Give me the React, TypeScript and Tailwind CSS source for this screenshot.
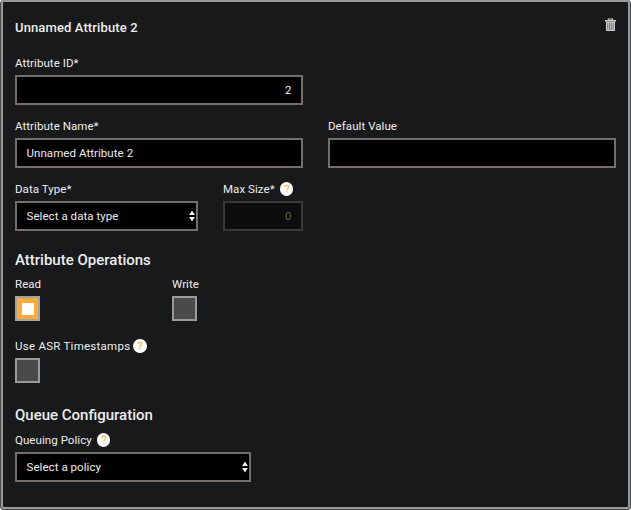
import React from "react";

function Help() {
  return (
    <span className="flex size-[13.5px] shrink-0 items-center justify-center rounded-full bg-white">
      <svg className="size-[13.5px]" viewBox="0 0 14 14" fill="none" stroke="#ffbd66" strokeWidth="1.5">
        <path d="M5 5.2C5 2.8 9 2.8 9 5.2c0 1.4-1.9 1.7-1.9 3.3" />
        <path d="M7.1 9.5v1.5" />
      </svg>
    </span>
  );
}

function Label({ text, help, wide }: { text: string; help?: boolean; wide?: boolean }) {
  return (
    <div className={wide ? "flex h-[26px] items-center gap-[3px] pt-[2px] whitespace-nowrap" : "flex h-[26px] items-center gap-[5px] pt-[2px] whitespace-nowrap"}>
      <span className={wide ? "tracking-[0.26px]" : ""}>{text}</span>
      {help && <Help />}
    </div>
  );
}

function Arrows() {
  return (
    <svg className="h-3 w-[6px]" viewBox="0 0 6 12" fill="#f4f4f4">
      <path d="M3 0.6 5.9 5H0.1zM3 11.4 0.1 7h5.8z" />
    </svg>
  );
}

function Select({ text }: { text: string }) {
  return (
    <div className="flex h-[30px] items-center justify-between border-2 border-[#756e6b] bg-black pr-px pl-[9.5px]">
      <span>{text}</span>
      <Arrows />
    </div>
  );
}

function Check({ on }: { on?: boolean }) {
  return on ? (
    <div className="flex size-[25px] items-center justify-center border-2 border-[#a3a3a3] bg-[#ffab3a]">
      <div className="size-3 bg-white" />
    </div>
  ) : (
    <div className="size-[25px] border-2 border-[#9b9999] bg-[#4a4a4a]" />
  );
}

function Trash() {
  return (
    <svg className="mt-px mr-px h-[14px] w-[11px]" viewBox="0 0 11 14">
      <path d="M3.5 2.5V1h4v1.5" fill="none" stroke="#d0d0d0" strokeWidth="1.2" />
      <path d="M0 2h11v1.6H0z" fill="#d0d0d0" />
      <path d="M1 4h9v9H1z" fill="#c8c8c8" />
      <path d="M2.75 5v7M4.6 5v7M6.4 5v7M8.25 5v7" stroke="#555657" strokeWidth="0.7" />
    </svg>
  );
}

export default function App() {
  return (
    <div className="h-[510px] w-[631px] bg-white font-['Roboto',sans-serif] text-[11.5px] leading-4 tracking-[0.06px] text-[#eeeeee]">
      <div className="h-[510px] w-[631px] rounded-[4px] border border-t-0 border-[#484848] bg-[#484848]">
        <div className="h-[509px] w-[629px] rounded-[3px] border-2 border-[#98999a] bg-[#18191b] pt-[15px] pr-[11px] pl-[12px]">
          <div className="flex h-[32px] items-start justify-between">
            <h2 className="pt-[3px] text-[13px] leading-4 font-medium tracking-[0.12px]">Unnamed Attribute 2</h2>
            <Trash />
          </div>
          <div className="w-[288px]">
            <Label text="Attribute ID*" />
            <div className="flex h-[30px] items-center justify-end border-2 border-[#756e6b] bg-black pr-[9.5px]">2</div>
          </div>
          <div className="mt-[7px] flex gap-[25px]">
            <div className="w-[288px]">
              <Label text="Attribute Name*" />
              <div className="flex h-[30px] items-center border-2 border-[#756e6b] bg-black pl-[9.5px]">Unnamed Attribute 2</div>
            </div>
            <div className="w-[288px]">
              <Label text="Default Value" />
              <div className="h-[30px] border-2 border-[#756e6b] bg-black" />
            </div>
          </div>
          <div className="mt-[7px] flex gap-[25px]">
            <div className="w-[183px]">
              <Label text="Data Type*" />
              <Select text="Select a data type" />
            </div>
            <div className="w-[80px]">
              <Label text="Max Size*" help />
              <div className="flex h-[30px] items-center justify-end border-2 border-[#3b3938] bg-[#0d0d0e] pr-[9.5px] text-[#626262]">0</div>
            </div>
          </div>
          <h3 className="mt-[19px] h-5 text-[15px] leading-5 font-medium tracking-normal">Attribute Operations</h3>
          <div className="flex">
            <div className="w-[157px]">
              <Label text="Read" />
              <Check on />
            </div>
            <div>
              <Label text="Write" />
              <Check />
            </div>
          </div>
          <div className="mt-[11px]">
            <Label text="Use ASR Timestamps" help wide />
            <Check />
          </div>
          <h3 className="mt-[22px] h-5 text-[15px] leading-5 font-medium tracking-normal">Queue Configuration</h3>
          <div className="mt-[1px] w-[236px]">
            <Label text="Queuing Policy" help />
            <Select text="Select a policy" />
          </div>
        </div>
      </div>
    </div>
  );
}
